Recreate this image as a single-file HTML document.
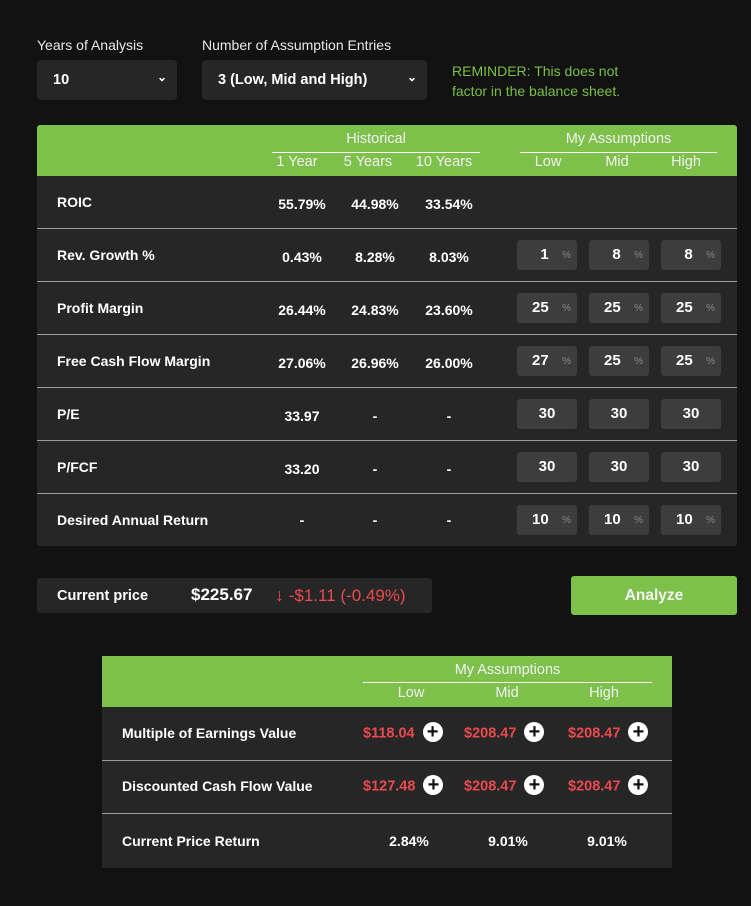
<!DOCTYPE html>
<html><head><meta charset="utf-8"><style>
*{margin:0;padding:0;box-sizing:border-box}
body{width:751px;height:906px;background:#121212;font-family:"Liberation Sans",sans-serif;color:#fff;position:relative;overflow:hidden}
.a{position:absolute}
.lbl{font-size:14px;color:#e8e8e8}
.sel{background:#262626;border-radius:4px;height:40px;font-weight:bold;font-size:14.5px;padding:0 0 0 16px;line-height:40px}
.sel i{position:absolute;right:10px;top:-3px;font-style:normal;font-size:12px;font-weight:bold}
.green{background:#7dc04a}
.panel{background:#262626}
.c{position:absolute;text-align:center;width:80px;font-size:14px;font-weight:bold}
.h{position:absolute;text-align:center;font-size:14.5px;color:#f2f2f2}
.rl{position:absolute;left:20px;font-size:14px;font-weight:bold}
.sep{position:absolute;left:0;right:0;height:1px;background:#9a9a9a}
.in{position:absolute;width:60px;height:30px;background:#3d3d3d;border-radius:3px;font-size:15px;font-weight:bold;line-height:30px;text-align:center}
.in.p{text-align:left;padding-left:15px}
.in.p b{position:absolute;right:6px;top:1px;font-size:10px;color:#888;font-weight:normal}
.red{color:#ec4a4f}
.pl{display:inline-block;width:20px;height:20px;border-radius:50%;background:#fff;color:#111;font-size:20px;line-height:20px;text-align:center;font-weight:bold;vertical-align:middle;margin-left:8px;margin-top:-3px}
</style></head><body>
<div class="a lbl" style="left:37px;top:37px">Years of Analysis</div>
<div class="a lbl" style="left:202px;top:37px">Number of Assumption Entries</div>
<div class="a sel" style="left:37px;top:60px;width:140px">10<i>&#8964;</i></div>
<div class="a sel" style="left:202px;top:60px;width:225px">3 (Low, Mid and High)<i>&#8964;</i></div>
<div class="a" style="left:452px;top:61px;font-size:14px;line-height:20px;color:#79c043">REMINDER: This does not<br>factor in the balance sheet.</div>

<div class="a panel" style="left:37px;top:125px;width:700px;height:421px;border-radius:3px;overflow:hidden">
 <div class="a green" style="left:0;top:0;width:700px;height:51px"></div>
 <div class="h" style="left:235px;top:6px;width:208px">Historical</div>
 <div class="a" style="left:235px;top:27px;width:208px;height:1px;background:#fff"></div>
 <div class="h" style="left:483px;top:6px;width:197px">My Assumptions</div>
 <div class="a" style="left:483px;top:27px;width:197px;height:1px;background:#fff"></div>
 <div class="h" style="left:225px;top:29px;width:70px">1 Year</div>
 <div class="h" style="left:296px;top:29px;width:70px">5 Years</div>
 <div class="h" style="left:372px;top:29px;width:70px">10 Years</div>
 <div class="h" style="left:476px;top:29px;width:70px">Low</div>
 <div class="h" style="left:545px;top:29px;width:70px">Mid</div>
 <div class="h" style="left:614px;top:29px;width:70px">High</div>

 <div class="a" style="left:0;top:51px;width:700px;height:53px">
  <div class="rl" style="top:18px">ROIC</div>
  <div class="c" style="left:225px;top:20px">55.79%</div><div class="c" style="left:298px;top:20px">44.98%</div><div class="c" style="left:372px;top:20px">33.54%</div>
 </div>
 <div class="sep" style="top:103px"></div>
 <div class="a" style="left:0;top:104px;width:700px;height:53px">
  <div class="rl" style="top:18px">Rev. Growth %</div>
  <div class="c" style="left:225px;top:20px">0.43%</div><div class="c" style="left:298px;top:20px">8.28%</div><div class="c" style="left:372px;top:20px">8.03%</div>
  <div class="in p" style="left:480px;top:11px">&nbsp;&nbsp;1<b>%</b></div><div class="in p" style="left:552px;top:11px">&nbsp;&nbsp;8<b>%</b></div><div class="in p" style="left:624px;top:11px">&nbsp;&nbsp;8<b>%</b></div>
 </div>
 <div class="sep" style="top:156px"></div>
 <div class="a" style="left:0;top:157px;width:700px;height:53px">
  <div class="rl" style="top:18px">Profit Margin</div>
  <div class="c" style="left:225px;top:20px">26.44%</div><div class="c" style="left:298px;top:20px">24.83%</div><div class="c" style="left:372px;top:20px">23.60%</div>
  <div class="in p" style="left:480px;top:11px">25<b>%</b></div><div class="in p" style="left:552px;top:11px">25<b>%</b></div><div class="in p" style="left:624px;top:11px">25<b>%</b></div>
 </div>
 <div class="sep" style="top:209px"></div>
 <div class="a" style="left:0;top:210px;width:700px;height:53px">
  <div class="rl" style="top:18px">Free Cash Flow Margin</div>
  <div class="c" style="left:225px;top:20px">27.06%</div><div class="c" style="left:298px;top:20px">26.96%</div><div class="c" style="left:372px;top:20px">26.00%</div>
  <div class="in p" style="left:480px;top:11px">27<b>%</b></div><div class="in p" style="left:552px;top:11px">25<b>%</b></div><div class="in p" style="left:624px;top:11px">25<b>%</b></div>
 </div>
 <div class="sep" style="top:262px"></div>
 <div class="a" style="left:0;top:263px;width:700px;height:53px">
  <div class="rl" style="top:18px">P/E</div>
  <div class="c" style="left:225px;top:20px">33.97</div><div class="c" style="left:298px;top:20px">-</div><div class="c" style="left:372px;top:20px">-</div>
  <div class="in" style="left:480px;top:11px">30</div><div class="in" style="left:552px;top:11px">30</div><div class="in" style="left:624px;top:11px">30</div>
 </div>
 <div class="sep" style="top:315px"></div>
 <div class="a" style="left:0;top:316px;width:700px;height:53px">
  <div class="rl" style="top:18px">P/FCF</div>
  <div class="c" style="left:225px;top:20px">33.20</div><div class="c" style="left:298px;top:20px">-</div><div class="c" style="left:372px;top:20px">-</div>
  <div class="in" style="left:480px;top:11px">30</div><div class="in" style="left:552px;top:11px">30</div><div class="in" style="left:624px;top:11px">30</div>
 </div>
 <div class="sep" style="top:368px"></div>
 <div class="a" style="left:0;top:369px;width:700px;height:52px">
  <div class="rl" style="top:18px">Desired Annual Return</div>
  <div class="c" style="left:225px;top:18px">-</div><div class="c" style="left:298px;top:18px">-</div><div class="c" style="left:372px;top:18px">-</div>
  <div class="in p" style="left:480px;top:11px">10<b>%</b></div><div class="in p" style="left:552px;top:11px">10<b>%</b></div><div class="in p" style="left:624px;top:11px">10<b>%</b></div>
 </div>
</div>

<div class="a panel" style="left:37px;top:578px;width:395px;height:35px;border-radius:3px">
 <div class="a" style="left:20px;top:10px;font-size:14.5px;font-weight:bold">Current price</div>
 <div class="a" style="left:154px;top:7px;font-size:17px;font-weight:bold">$225.67</div>
 <div class="a red" style="left:238px;top:7px;font-size:17px"><b style="font-size:18px">&#8595;</b> -$1.11 (-0.49%)</div>
</div>
<div class="a green" style="left:571px;top:576px;width:166px;height:39px;border-radius:3px;text-align:center;line-height:39px;font-size:15.5px;font-weight:bold;color:#f4f4f4">Analyze</div>

<div class="a panel" style="left:102px;top:656px;width:570px;height:212px">
 <div class="a green" style="left:0;top:0;width:570px;height:51px"></div>
 <div class="h" style="left:261px;top:6px;width:289px">My Assumptions</div>
 <div class="a" style="left:261px;top:26px;width:289px;height:1px;background:#fff"></div>
 <div class="h" style="left:269px;top:29px;width:80px">Low</div>
 <div class="h" style="left:365px;top:29px;width:80px">Mid</div>
 <div class="h" style="left:462px;top:29px;width:80px">High</div>
 <div class="rl" style="top:69px">Multiple of Earnings Value</div>
 <div class="a red" style="left:261px;top:69px;font-size:14.5px;font-weight:bold">$118.04<span class="pl">+</span></div>
 <div class="a red" style="left:362px;top:69px;font-size:14.5px;font-weight:bold">$208.47<span class="pl">+</span></div>
 <div class="a red" style="left:466px;top:69px;font-size:14.5px;font-weight:bold">$208.47<span class="pl">+</span></div>
 <div class="sep" style="top:104px"></div>
 <div class="rl" style="top:122px">Discounted Cash Flow Value</div>
 <div class="a red" style="left:261px;top:122px;font-size:14.5px;font-weight:bold">$127.48<span class="pl">+</span></div>
 <div class="a red" style="left:362px;top:122px;font-size:14.5px;font-weight:bold">$208.47<span class="pl">+</span></div>
 <div class="a red" style="left:466px;top:122px;font-size:14.5px;font-weight:bold">$208.47<span class="pl">+</span></div>
 <div class="sep" style="top:157px"></div>
 <div class="rl" style="top:177px">Current Price Return</div>
 <div class="c" style="left:267px;top:177px">2.84%</div>
 <div class="c" style="left:366px;top:177px">9.01%</div>
 <div class="c" style="left:465px;top:177px">9.01%</div>
</div>
</body></html>
